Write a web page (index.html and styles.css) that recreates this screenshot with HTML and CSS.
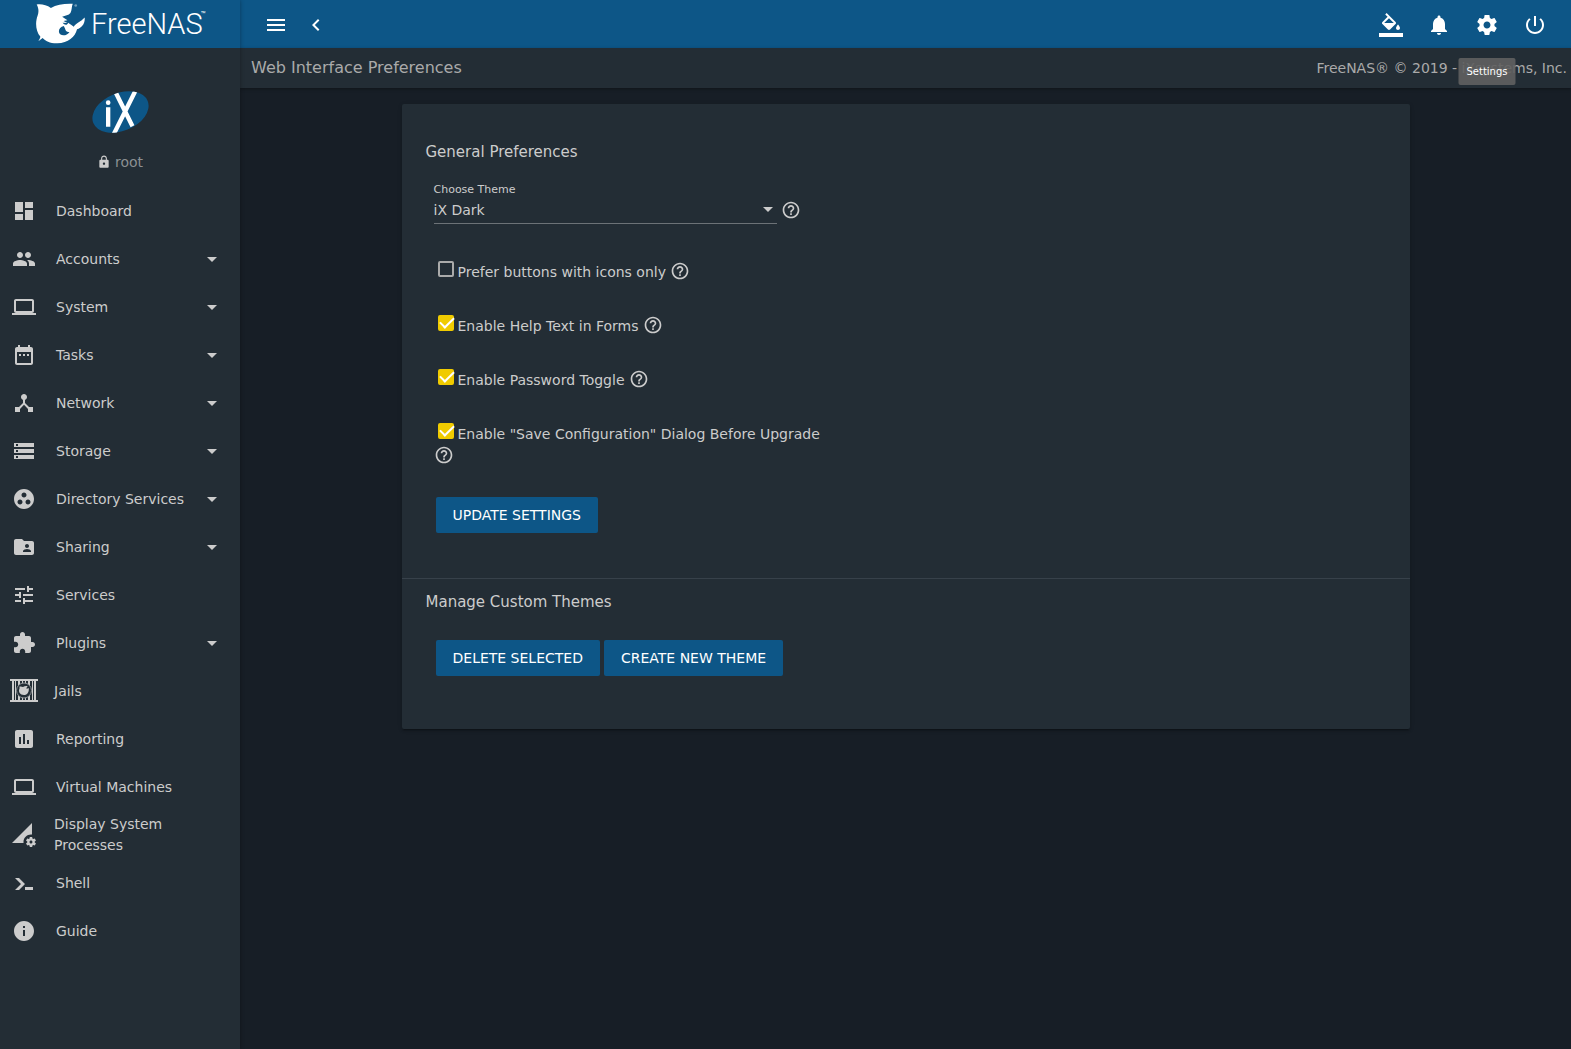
FILE: index.html
```html
<!DOCTYPE html>
<html lang="en">
<head>
<meta charset="utf-8">
<meta name="viewport" content="width=device-width, initial-scale=1">
<title>FreeNAS - Web Interface Preferences</title>
<link rel="stylesheet" href="styles.css">
</head>
<body>
<svg class="sprite" aria-hidden="true">
  <symbol id="i-menu" viewBox="0 0 24 24"><path d="M3 18h18v-2H3v2zm0-5h18v-2H3v2zm0-7v2h18V6H3z"/></symbol>
  <symbol id="i-chevron" viewBox="0 0 24 24"><path d="M15.41 7.41L14 6l-6 6 6 6 1.41-1.41L10.83 12z"/></symbol>
  <symbol id="i-fill" viewBox="0 0 24 24"><path d="M16.56 8.94L7.62 0 6.21 1.41l2.38 2.38-5.15 5.15c-.59.59-.59 1.54 0 2.12l5.5 5.5c.29.29.68.44 1.06.44s.77-.15 1.06-.44l5.5-5.5c.59-.58.59-1.53 0-2.12zM5.21 10L10 5.21 14.79 10H5.21zM19 11.5s-2 2.17-2 3.5c0 1.1.9 2 2 2s2-.9 2-2c0-1.33-2-3.5-2-3.5zM0 20h24v4H0z"/></symbol>
  <symbol id="i-bell" viewBox="0 0 24 24"><path d="M12 22c1.1 0 2-.9 2-2h-4c0 1.1.89 2 2 2zm6-6v-5c0-3.07-1.64-5.64-4.5-6.32V4c0-.83-.67-1.5-1.5-1.5s-1.5.67-1.5 1.5v.68C7.63 5.36 6 7.92 6 11v5l-2 2v1h16v-1l-2-2z"/></symbol>
  <symbol id="i-gear" viewBox="0 0 24 24"><path d="M19.43 12.98c.04-.32.07-.64.07-.98s-.03-.66-.07-.98l2.11-1.65c.19-.15.24-.42.12-.64l-2-3.46c-.12-.22-.39-.3-.61-.22l-2.49 1c-.52-.4-1.08-.73-1.69-.98l-.38-2.65C14.46 2.18 14.25 2 14 2h-4c-.25 0-.46.18-.49.42l-.38 2.65c-.61.25-1.17.59-1.69.98l-2.49-1c-.23-.09-.49 0-.61.22l-2 3.46c-.13.22-.07.49.12.64l2.11 1.65c-.04.32-.07.65-.07.98s.03.66.07.98l-2.11 1.65c-.19.15-.24.42-.12.64l2 3.46c.12.22.39.3.61.22l2.49-1c.52.4 1.08.73 1.69.98l.38 2.65c.03.24.24.42.49.42h4c.25 0 .46-.18.49-.42l.38-2.65c.61-.25 1.17-.59 1.69-.98l2.49 1c.23.09.49 0 .61-.22l2-3.46c.12-.22.07-.49-.12-.64l-2.11-1.65zM12 15.5c-1.93 0-3.5-1.57-3.5-3.5s1.57-3.5 3.5-3.5 3.5 1.57 3.5 3.5-1.57 3.5-3.5 3.5z"/></symbol>
  <symbol id="i-power" viewBox="0 0 24 24"><path d="M13 3h-2v10h2V3zm4.83 2.17l-1.42 1.42C17.99 7.86 19 9.81 19 12c0 3.87-3.13 7-7 7s-7-3.13-7-7c0-2.19 1.01-4.14 2.58-5.42L6.17 5.17C4.23 6.82 3 9.26 3 12c0 4.97 4.03 9 9 9s9-4.03 9-9c0-2.74-1.23-5.18-3.17-6.83z"/></symbol>
  <symbol id="i-lock" viewBox="0 0 24 24"><path d="M18 8h-1V6c0-2.76-2.24-5-5-5S7 3.24 7 6v2H6c-1.1 0-2 .9-2 2v10c0 1.1.9 2 2 2h12c1.1 0 2-.9 2-2V10c0-1.1-.9-2-2-2zm-6 9c-1.1 0-2-.9-2-2s.9-2 2-2 2 .9 2 2-.9 2-2 2zm3.1-9H8.9V6c0-1.71 1.39-3.1 3.1-3.1 1.71 0 3.1 1.39 3.1 3.1v2z"/></symbol>
  <symbol id="i-arrow" viewBox="0 0 24 24"><path d="M7 10l5 5 5-5z"/></symbol>
  <symbol id="i-help" viewBox="0 0 24 24"><path d="M11 18h2v-2h-2v2zm1-16C6.48 2 2 6.48 2 12s4.48 10 10 10 10-4.48 10-10S17.52 2 12 2zm0 18c-4.41 0-8-3.59-8-8s3.59-8 8-8 8 3.59 8 8-3.59 8-8 8zm0-14c-2.21 0-4 1.79-4 4h2c0-1.1.9-2 2-2s2 .9 2 2c0 2-3 1.75-3 5h2c0-2.25 3-2.5 3-5 0-2.21-1.79-4-4-4z"/></symbol>
  <symbol id="i-dashboard" viewBox="0 0 24 24"><path d="M3 13h8V3H3v10zm0 8h8v-6H3v6zm10 0h8V11h-8v10zm0-18v6h8V3h-8z"/></symbol>
  <symbol id="i-group" viewBox="0 0 24 24"><path d="M16 11c1.66 0 2.99-1.34 2.99-3S17.66 5 16 5c-1.66 0-3 1.34-3 3s1.34 3 3 3zm-8 0c1.66 0 2.99-1.34 2.99-3S9.66 5 8 5C6.34 5 5 6.34 5 8s1.34 3 3 3zm0 2c-2.33 0-7 1.17-7 3.5V19h14v-2.5c0-2.33-4.67-3.5-7-3.5zm8 0c-.29 0-.62.02-.97.05 1.16.84 1.97 1.97 1.97 3.45V19h6v-2.5c0-2.33-4.67-3.5-7-3.5z"/></symbol>
  <symbol id="i-laptop" viewBox="0 0 24 24"><path d="M20 18c1.1 0 1.99-.9 1.99-2L22 6c0-1.1-.9-2-2-2H4c-1.1 0-2 .9-2 2v10c0 1.1.9 2 2 2H0v2h24v-2h-4zM4 6h16v10H4V6z"/></symbol>
  <symbol id="i-calendar" viewBox="0 0 24 24"><path d="M9 11H7v2h2v-2zm4 0h-2v2h2v-2zm4 0h-2v2h2v-2zm2-7h-1V2h-2v2H8V2H6v2H5c-1.11 0-1.99.9-1.99 2L3 20c0 1.1.89 2 2 2h14c1.1 0 2-.9 2-2V6c0-1.1-.9-2-2-2zm0 16H5V9h14v11z"/></symbol>
  <symbol id="i-hub" viewBox="0 0 24 24"><path d="M17 16l-4-4V8.82C14.16 8.4 15 7.3 15 6c0-1.66-1.34-3-3-3S9 4.34 9 6c0 1.3.84 2.4 2 2.82V12l-4 4H3v5h5v-3.05l4-4.2 4 4.2V21h5v-5h-4z"/></symbol>
  <symbol id="i-storage" viewBox="0 0 24 24"><path d="M2 20h20v-4H2v4zm2-3h2v2H4v-2zM2 4v4h20V4H2zm4 3H4V5h2v2zm-4 7h20v-4H2v4zm2-3h2v2H4v-2z"/></symbol>
  <symbol id="i-workgroup" viewBox="0 0 24 24"><path d="M12 2C6.48 2 2 6.48 2 12s4.48 10 10 10 10-4.48 10-10S17.52 2 12 2zM8 17.500c-1.380 0-2.500-1.120-2.500-2.500s1.120-2.500 2.500-2.500 2.500 1.120 2.500 2.500-1.120 2.500-2.500 2.500zM9.500 8c0-1.380 1.120-2.500 2.500-2.500s2.500 1.120 2.500 2.500-1.120 2.500-2.500 2.500S9.500 9.380 9.500 8zm6.500 9.500c-1.380 0-2.500-1.120-2.500-2.500s1.120-2.500 2.500-2.500 2.500 1.120 2.500 2.500-1.120 2.500-2.500 2.500z"/></symbol>
  <symbol id="i-share" viewBox="0 0 24 24"><path d="M20 6h-8l-2-2H4c-1.1 0-1.99.9-1.99 2L2 18c0 1.1.9 2 2 2h16c1.1 0 2-.9 2-2V8c0-1.100-.9-2-2-2zm-5 3c1.100 0 2 .9 2 2s-.9 2-2 2-2-.9-2-2 .9-2 2-2zm4 8h-8v-1c0-1.330 2.670-2 4-2s4 .67 4 2v1z"/></symbol>
  <symbol id="i-tune" viewBox="0 0 24 24"><path d="M3 17v2h6v-2H3zM3 5v2h10V5H3zm10 16v-2h8v-2h-8v-2h-2v6h2zM7 9v2H3v2h4v2h2V9H7zm14 4v-2H11v2h10zm-6-4h2V7h4V5h-4V3h-2v6z"/></symbol>
  <symbol id="i-plugin" viewBox="0 0 24 24"><path d="M20.500 11H19V7c0-1.100-.9-2-2-2h-4V3.500C13 2.120 11.880 1 10.500 1S8 2.120 8 3.500V5H4c-1.100 0-1.990.9-1.990 2v3.800H3.500c1.490 0 2.700 1.210 2.700 2.700s-1.210 2.700-2.700 2.700H2V20c0 1.100.9 2 2 2h3.800v-1.500c0-1.490 1.210-2.700 2.700-2.700 1.490 0 2.700 1.210 2.700 2.700V22H17c1.100 0 2-.9 2-2v-4h1.500c1.380 0 2.500-1.120 2.500-2.500S21.880 11 20.500 11z"/></symbol>
  <symbol id="i-jail" viewBox="0 0 28 24">
    <path d="M0 0h28v2H0zM0 21h28v2H0zM2 2h2v19H2zM5 2h1v19H5zM8 2h2v19H8zM12 2h1v19h-1zM15 2h1v19h-1zM18 2h2v19h-2zM22 2h1v19h-1zM24 2h2v19h-2z"/>
    <circle class="jail-ring" cx="14" cy="11.500" r="7.500"/>
    <path d="M9.500 7.500c1.500-.2 2.500 0 3.500.4 1.300-.9 3-1.200 4.500-.9-.2 1-.6 1.600-1.400 2l.9.8 1.700-.9c.7 4-1.500 7.100-4.700 7.100-4 0-6-3.500-4.500-6.500z"/>
  </symbol>
  <symbol id="i-chart" viewBox="0 0 24 24"><path d="M19 3H5c-1.100 0-2 .9-2 2v14c0 1.100.9 2 2 2h14c1.100 0 2-.9 2-2V5c0-1.100-.9-2-2-2zM9 17H7v-7h2v7zm4 0h-2V7h2v10zm4 0h-2v-4h2v4z"/></symbol>
  <symbol id="i-process" viewBox="0 0 24 24"><path d="M18.990 11.500c.34 0 .67.03 1 .07L20 0 0 20h11.560c-.04-.33-.07-.66-.07-1 0-4.140 3.360-7.500 7.500-7.500zm3.710 7.990c.02-.16.04-.32.04-.49 0-.17-.01-.33-.04-.49l1.060-.83c.09-.08.12-.21.06-.32l-1-1.730c-.06-.11-.19-.15-.31-.11l-1.240.5c-.26-.2-.54-.37-.85-.49l-.19-1.320c-.01-.12-.12-.21-.24-.21h-2c-.12 0-.23.09-.25.21l-.19 1.320c-.3.13-.59.29-.85.49l-1.240-.5c-.11-.04-.24 0-.31.11l-1 1.730c-.06.11-.04.24.06.32l1.060.83c-.02.16-.03.32-.03.49 0 .17.01.33.03.49l-1.060.83c-.09.08-.12.21-.06.32l1 1.730c.06.11.19.15.31.11l1.240-.5c.26.2.54.37.85.49l.19 1.320c.02.12.12.21.25.21h2c.12 0 .23-.09.25-.21l.19-1.320c.3-.13.59-.29.84-.49l1.250.5c.11.04.24 0 .31-.11l1-1.730c.06-.11.03-.24-.06-.32l-1.070-.83zm-3.710 1.010c-.83 0-1.500-.67-1.500-1.500s.67-1.500 1.500-1.500 1.500.67 1.500 1.500-.67 1.500-1.500 1.500z"/></symbol>
  <symbol id="i-shell" viewBox="0 0 24 24"><path d="M3 7h4l6 6-6 6H3l6-6zM13 16h8v3h-8z"/></symbol>
  <symbol id="i-info" viewBox="0 0 24 24"><path d="M12 2C6.480 2 2 6.480 2 12s4.480 10 10 10 10-4.480 10-10S17.520 2 12 2zm1 15h-2v-6h2v6zm0-8h-2V7h2v2z"/></symbol>
</svg>

<div class="app">
  <aside class="sidebar">
    <a class="brand" href="#" aria-label="FreeNAS home">
      <svg class="brand-mark" viewBox="108 8 148 123" aria-hidden="true">
        <path fill-rule="evenodd" d="M110 12C124 10 140 13 153 23C170 12 194 9 219 10C215 18 217 30 212 38C207 45 196 46 187 49L203 60L191 62L203 68L188 67C194 74 202 76 205 67C211 71 217 76 222 79C228 68 242 65 255 51C257 70 246 83 232 87C226 111 204 130 170 129C150 129 136 122 128 113L115 123C118 118 121 114 121 109C107 92 105 66 113 45C117 34 116 22 110 12ZM192 77C178 79 173 94 181 102C190 109 203 104 209 95C201 97 197 90 196 85Z"/>
        <circle class="brand-reg" cx="228" cy="15" r="4"/>
      </svg>
      <span class="brand-name">FreeNAS</span><span class="brand-tm">™</span>
    </a>
    <div class="profile">
      <svg class="profile-logo" viewBox="275 273 170 126" role="img" aria-label="iXsystems">
        <defs><clipPath id="oval"><ellipse cx="360" cy="336" rx="88" ry="57" transform="rotate(-22 360 336)"/></clipPath></defs>
        <g clip-path="url(#oval)">
          <rect class="oval-fill" x="270" y="268" width="180" height="136"/>
          <path class="oval-line" d="M346 278L396 379M408 266L336 410M323 322V380"/>
          <circle class="oval-dot" cx="323" cy="308" r="7"/>
        </g>
      </svg>
      <div class="profile-user"><svg class="profile-lock"><use href="#i-lock"/></svg><span>root</span></div>
    </div>
    <nav class="nav" aria-label="Main">
      <a class="nav-item" href="#"><svg class="icon"><use href="#i-dashboard"/></svg><span class="nav-label">Dashboard</span></a>
      <a class="nav-item" href="#"><svg class="icon"><use href="#i-group"/></svg><span class="nav-label">Accounts</span><svg class="icon"><use href="#i-arrow"/></svg></a>
      <a class="nav-item" href="#"><svg class="icon"><use href="#i-laptop"/></svg><span class="nav-label">System</span><svg class="icon"><use href="#i-arrow"/></svg></a>
      <a class="nav-item" href="#"><svg class="icon"><use href="#i-calendar"/></svg><span class="nav-label">Tasks</span><svg class="icon"><use href="#i-arrow"/></svg></a>
      <a class="nav-item" href="#"><svg class="icon"><use href="#i-hub"/></svg><span class="nav-label">Network</span><svg class="icon"><use href="#i-arrow"/></svg></a>
      <a class="nav-item" href="#"><svg class="icon"><use href="#i-storage"/></svg><span class="nav-label">Storage</span><svg class="icon"><use href="#i-arrow"/></svg></a>
      <a class="nav-item" href="#"><svg class="icon"><use href="#i-workgroup"/></svg><span class="nav-label">Directory Services</span><svg class="icon"><use href="#i-arrow"/></svg></a>
      <a class="nav-item" href="#"><svg class="icon"><use href="#i-share"/></svg><span class="nav-label">Sharing</span><svg class="icon"><use href="#i-arrow"/></svg></a>
      <a class="nav-item" href="#"><svg class="icon"><use href="#i-tune"/></svg><span class="nav-label">Services</span></a>
      <a class="nav-item" href="#"><svg class="icon"><use href="#i-plugin"/></svg><span class="nav-label">Plugins</span><svg class="icon"><use href="#i-arrow"/></svg></a>
      <a class="nav-item nav-item-wide" href="#"><svg class="icon icon-wide"><use href="#i-jail"/></svg><span class="nav-label">Jails</span></a>
      <a class="nav-item" href="#"><svg class="icon"><use href="#i-chart"/></svg><span class="nav-label">Reporting</span></a>
      <a class="nav-item" href="#"><svg class="icon"><use href="#i-laptop"/></svg><span class="nav-label">Virtual Machines</span></a>
      <a class="nav-item nav-item-wide" href="#"><svg class="icon icon-wide"><use href="#i-process"/></svg><span class="nav-label">Display System Processes</span></a>
      <a class="nav-item" href="#"><svg class="icon"><use href="#i-shell"/></svg><span class="nav-label">Shell</span></a>
      <a class="nav-item" href="#"><svg class="icon"><use href="#i-info"/></svg><span class="nav-label">Guide</span></a>
    </nav>
  </aside>

  <div class="page">
    <header class="topbar">
      <div class="topbar-left">
        <button class="icon-button" type="button" aria-label="Toggle menu"><svg class="icon"><use href="#i-menu"/></svg></button>
        <button class="icon-button" type="button" aria-label="Collapse menu"><svg class="icon"><use href="#i-chevron"/></svg></button>
      </div>
      <div class="topbar-right">
        <button class="icon-button" type="button" aria-label="Change theme"><svg class="icon"><use href="#i-fill"/></svg></button>
        <button class="icon-button" type="button" aria-label="Notifications"><svg class="icon"><use href="#i-bell"/></svg></button>
        <button class="icon-button" type="button" aria-describedby="tip"><svg class="icon"><use href="#i-gear"/></svg><span class="tooltip" id="tip" role="tooltip">Settings</span></button>
        <button class="icon-button" type="button" aria-label="Power"><svg class="icon"><use href="#i-power"/></svg></button>
      </div>
    </header>
    <div class="crumbs">
      <h1 class="crumbs-title">Web Interface Preferences</h1>
      <span class="crumbs-copy">FreeNAS® © 2019 - iXsystems, Inc.</span>
    </div>
    <main class="content">
      <div class="card">
        <section class="general">
          <h2 class="section-title">General Preferences</h2>
          <form class="form">
            <div class="theme-row">
              <div class="theme-field">
                <label class="theme-label" for="theme">Choose Theme</label>
                <div class="select-wrap">
                  <select class="select" id="theme"><option>iX Dark</option></select>
                  <svg class="select-arrow"><use href="#i-arrow"/></svg>
                </div>
              </div>
              <svg class="help"><use href="#i-help"/></svg>
            </div>
            <div class="check-row"><input class="check" type="checkbox" id="c1"><label for="c1">Prefer buttons with icons only</label><svg class="help"><use href="#i-help"/></svg></div>
            <div class="check-row"><input class="check" type="checkbox" id="c2" checked><label for="c2">Enable Help Text in Forms</label><svg class="help"><use href="#i-help"/></svg></div>
            <div class="check-row"><input class="check" type="checkbox" id="c3" checked><label for="c3">Enable Password Toggle</label><svg class="help"><use href="#i-help"/></svg></div>
            <div class="check-row"><input class="check" type="checkbox" id="c4" checked><label for="c4">Enable "Save Configuration" Dialog Before Upgrade</label><svg class="help"><use href="#i-help"/></svg></div>
            <div class="actions"><button class="button" type="button">UPDATE SETTINGS</button></div>
          </form>
        </section>
        <section class="custom">
          <h2 class="section-title">Manage Custom Themes</h2>
          <div class="form">
            <div class="actions"><button class="button" type="button">DELETE SELECTED</button><button class="button" type="button">CREATE NEW THEME</button></div>
          </div>
        </section>
      </div>
    </main>
  </div>
</div>
</body>
</html>
```
FILE: styles.css
```css
:root {
  --bg1: #171e26;
  --bg2: #232d35;
  --fg1: #aaaaaa;
  --fg2: #cccccc;
  --primary: #0d5687;
  --yellow: #f0cb00;
}

* { box-sizing: border-box; }

body {
  margin: 0;
  background: var(--bg1);
  color: var(--fg2);
  font: 14px/22px "DejaVu Sans", sans-serif;
}

button, select, input { font: inherit; }

svg { fill: currentColor; flex: none; }

.sprite { position: absolute; width: 0; height: 0; }
.jail-ring { fill: var(--bg2); stroke: #8d9296; stroke-width: 1; }

.app { display: flex; min-height: 100vh; }

.icon { display: block; width: 24px; height: 24px; }
.icon-wide { width: 28px; }

/* Sidebar */
.sidebar {
  flex: none;
  width: 240px;
  background: var(--bg2);
  box-shadow: 0 0 4px rgba(0, 0, 0, .35);
  z-index: 1;
}

.brand {
  display: flex;
  align-items: flex-start;
  height: 48px;
  padding: 3px 0 0 36px;
  background: var(--primary);
  color: #fff;
  text-decoration: none;
}
.brand-mark { width: 49px; height: 41px; }
.brand-reg { opacity: .4; }
.brand-name {
  padding-left: 6px;
  font: 300 29px/42px "Roboto", sans-serif;
}
.brand-tm { font: 8px/24px "Roboto", sans-serif; margin-left: -2px; }

.profile {
  display: flex;
  flex-direction: column;
  align-items: center;
  gap: 18px;
  padding: 43px 0 14px;
}
.profile-logo { width: 57px; height: 42px; }
.oval-fill { fill: var(--primary); }
.oval-line { fill: none; stroke: #fff; stroke-width: 13; }
.oval-dot { fill: #fff; }
.profile-user {
  display: flex;
  align-items: center;
  gap: 4px;
  line-height: 22px;
  color: #8b9093;
}
.profile-lock { width: 14px; height: 14px; color: var(--fg2); }

.nav-item {
  display: flex;
  align-items: center;
  gap: 20px;
  min-height: 48px;
  padding: 0 16px 0 12px;
  color: var(--fg2);
  line-height: 21px;
  text-decoration: none;
}
.nav-item .icon + .nav-label { flex: 1; }
.nav-item .nav-label + .icon { margin-left: -20px; }
.nav-label { white-space: nowrap; }
.nav-item-wide { gap: 16px; padding: 0 48px 0 10px; }
.nav-item-wide .nav-label { white-space: normal; }

/* Header */
.page { flex: 1; min-width: 0; }

.topbar {
  display: flex;
  justify-content: space-between;
  align-items: center;
  height: 48px;
  padding: 2px 24px 0;
  background: var(--primary);
}
.topbar-left { display: flex; gap: 16px; }
.topbar-right { display: flex; gap: 24px; }
.icon-button {
  position: relative;
  padding: 0;
  border: 0;
  background: none;
  color: #fff;
  cursor: pointer;
}
.tooltip {
  position: absolute;
  top: 45px;
  left: 50%;
  transform: translateX(-50%);
  padding: 6px 8px;
  border-radius: 2px;
  background: rgba(97, 97, 97, .9);
  color: #fff;
  font-size: 10px;
  line-height: 15px;
}

.crumbs {
  display: flex;
  justify-content: space-between;
  align-items: center;
  height: 40px;
  padding: 0 4px 0 11px;
  background: var(--bg2);
  color: var(--fg1);
  box-shadow: 0 1px 3px rgba(0, 0, 0, .35);
}
.crumbs-title { margin: 0; font-size: 16px; font-weight: 400; line-height: 24px; }

/* Preferences card */
.content { padding: 16px; }
.card {
  max-width: 1008px;
  margin: 0 auto;
  border-radius: 2px;
  background: var(--bg2);
  box-shadow: 0 3px 1px -2px rgba(0, 0, 0, .2), 0 2px 2px 0 rgba(0, 0, 0, .14), 0 1px 5px 0 rgba(0, 0, 0, .12);
}
.general { padding: 37px 24px 45px; border-bottom: 1px solid #37414a; }
.custom { padding: 12px 24px 53px; }
.custom .section-title { margin-bottom: 27px; }
.section-title {
  margin: 0 0 19px;
  font-size: 15px;
  font-weight: 400;
}
.form {
  display: flex;
  flex-direction: column;
  gap: 32px;
  max-width: 408px;
  padding-left: 8px;
}

.theme-row {
  display: flex;
  align-items: flex-end;
  gap: 4px;
  padding-bottom: 5px;
}
.theme-field { width: 343px; }
.theme-label { display: block; font-size: 11px; line-height: 16px; }
.select-wrap { position: relative; }
.select {
  display: block;
  width: 100%;
  height: 26px;
  padding: 0 24px 2px 0;
  border: 0;
  border-bottom: 1px solid #6c7277;
  border-radius: 0;
  background: var(--bg2);
  color: var(--fg2);
  appearance: none;
}
.select-arrow {
  position: absolute;
  top: -1px;
  right: -3px;
  width: 24px;
  height: 24px;
  pointer-events: none;
}
.help { width: 20px; height: 20px; }
.theme-row .help { margin-bottom: 4px; }

.check-row {
  display: flex;
  flex-wrap: wrap;
  align-items: flex-start;
  column-gap: 4px;
}
.check {
  display: grid;
  width: 16px;
  height: 16px;
  margin: 0 0 0 4px;
  border: 2px solid var(--fg1);
  border-radius: 2px;
  appearance: none;
}
.check:checked { border-color: var(--yellow); background: var(--yellow); }
.check:checked::before {
  content: "";
  width: 12px;
  height: 6px;
  border: solid #fff;
  border-width: 0 0 2px 2px;
  transform: rotate(-45deg);
}

.actions { display: flex; flex-wrap: wrap; gap: 4px; padding-left: 2px; }
.button {
  height: 36px;
  padding: 0 17px;
  border: 0;
  border-radius: 2px;
  background: var(--primary);
  color: #fff;
  white-space: nowrap;
  cursor: pointer;
}
```
